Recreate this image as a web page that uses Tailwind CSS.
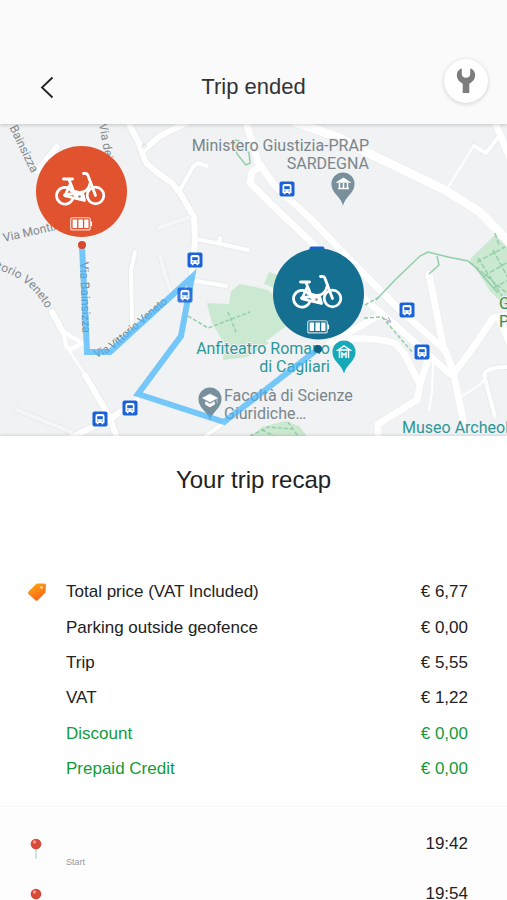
<!DOCTYPE html>
<html lang="en">
<head>
    <meta charset="UTF-8">
    <meta name="viewport" content="width=device-width, initial-scale=1.0">
    <title>Trip ended</title>
    <script src="https://cdn.jsdelivr.net/npm/@tailwindcss/browser@4"></script>
</head>
<body class="h-screen overflow-hidden flex flex-col bg-white text-[#222] font-['Liberation_Sans',Arial,sans-serif]">

    <header class="relative z-10 shrink-0 bg-[#fafafa] pt-[50px] shadow-[0_1px_4px_rgba(0,0,0,0.2)]">
        <div class="grid grid-cols-[1fr_auto_1fr] items-center h-[74px] px-[19px]">
            <button type="button" aria-label="Back" class="justify-self-start pl-[17px]">
                <svg class="w-5 h-6" viewBox="0 0 20 24" fill="none" stroke="#222" stroke-width="1.8"><path d="M16.500 2.500 6 12.500 16.500 22.500"/></svg>
            </button>
            <h1 class="text-[22px] leading-7 text-[#333]">Trip ended</h1>
            <button type="button" aria-label="Report a problem" class="justify-self-end self-start mt-[9px] w-11 h-11 rounded-full bg-white shadow-[0_1px_4px_rgba(0,0,0,0.18)] flex items-center justify-center">
                <svg class="w-6 h-7" viewBox="0 0 24 28" fill="#7d7d7d"><path d="M7 1.500C4.300 2.800 2.800 5.300 2.800 8.300c0 3.700 2.300 6.500 5.900 8.400V26h6.600v-9.300c3.600-1.900 5.900-4.700 5.900-8.400 0-3-1.500-5.500-4.200-6.800l-.8.500v5.300c0 1.900-1.700 3.400-4.200 3.400S7.800 9.200 7.800 7.300V2z"/></svg>
            </button>
        </div>
    </header>

    <!-- Map -->
    <section aria-label="Trip map" class="shrink-0 h-[312px] bg-[#f0f2f3]">
        <svg class="w-full h-full font-[Roboto,sans-serif]" viewBox="0 124 507 312" preserveAspectRatio="xMidYMid slice">
            <defs>
                <symbol id="bus" viewBox="0 0 16 16" overflow="visible">
                    <rect x=".5" y=".5" width="15" height="15" rx="2" fill="#1a62d8"/>
                    <path d="M3.500 12V5q0-2 2-2h5q2 0 2 2v7h-1.200v1.200H9.500V12h-3v1.200H4.700V12z" fill="#fff"/>
                    <path d="M5.200 5.200h5.600V8.200H5.200z" fill="#1a62d8"/>
                    <path d="M5.200 10h1.300M9.500 10h1.300" stroke="#1a62d8"/>
                </symbol>
                <symbol id="bike" viewBox="0 0 52 34" overflow="visible">
                    <g fill="none" stroke="#fff" stroke-width="2.800" stroke-linecap="round" stroke-linejoin="round">
                        <path d="M17.500 18.500a8.400 8.400 0 1 0 1 9"/>
                        <circle cx="41.500" cy="23.500" r="8.300"/>
                        <path d="M29.500 1.500h2q1.800 0 2.500 2l7.500 20"/>
                        <path d="M36.500 10Q34.500 20 26 20.500L17 18.500"/>
                        <path d="M9.500 7h9"/>
                        <path d="M15 7.500l5 12.500M16.500 11.500l-5.500 12"/>
                        <path d="M10.500 23l9-1.500 9.500 1 1.500 6-19-4.500"/>
                    </g>
                    <path d="M17 20l9 2 4 1-1 6-7-2z" fill="#fff"/>
                    <circle cx="25.500" cy="24.500" r="1.300" fill="#8c8c8c"/>
                </symbol>
                <symbol id="battery" viewBox="0 0 23 14" overflow="visible">
                    <rect x=".7" y=".7" width="19.600" height="12.200" rx="2" fill="none" stroke="#fff" stroke-opacity=".8" stroke-width="1.100"/>
                    <path d="M21.300 4.500v4.700" stroke="#fff" stroke-width="1.500"/>
                    <path d="M2.600 2.500h4.500v8.600H2.600zM8.400 2.500h4.500v8.600H8.400zM14.200 2.500h4.300v8.600h-4.300z" fill="#fff"/>
                </symbol>
                <symbol id="pin" viewBox="0 0 24 34" overflow="visible">
                    <path d="M12 .5a11.500 11.500 0 0 0-11.500 11.500c0 5 2.500 8 5.500 11.500 3 3.500 4.800 6 6 10 1.200-4 3-6.500 6-10 3-3.500 5.500-6.500 5.500-11.500A11.500 11.500 0 0 0 12 .5z"/>
                </symbol>
            </defs>

            <!-- Parks -->
            <g fill="#cbe8d0">
                <path d="M207 303l22 1 2-13 9-7 15 3 13 3 25 25-8 12-19 14 3 2-22 14-24 3 1-17-12-20z"/>
                <path d="M269 272l8 3-3 13-10-4z"/>
                <path d="M252 436l10-9 23-6 14 5 8 10z"/>
                <path d="M470 259l26-25 11 10v64l-17-17z"/>
            </g>

            <!-- Roads: soft casing first, white fill over it -->
            <g fill="none" stroke-linecap="round" stroke-linejoin="round">
                <g stroke="#e8ebec">
                    <path stroke-width="8" d="M127 120l12 23 5 15 3 6 11 9 14 10 8 10 14 24 1 23-3 33M144 150l16-14 28-14M57 147l-20 24M52 312l12 22M85 375l25 43 7 20M70 438l40-19 27-19"/>
                    <path stroke-width="6" d="M180 190l13-23 5-4 9 3M195 239l22 4 31 7M219 243l1-5M158 228l32-11M135 252l-4 18 1 55M160 256l5 19 6 16M17 410l54 22M196 281l30 5M203 438l22-16"/>
                    <path stroke-width="10" d="M295 122l45 16 28 15 77 37 35 22 29 30"/>
                    <path stroke-width="8" d="M246 122l12 40 17 24 35 32 52 54 38 38 45 40 8 20 12 60M258 168l-6 4-2 11 20 20 40 38 57 60 28 24 35 31 20 18M429 274l15 76M455 372l20-27 18-27 15-3M500 320l9 22M338 340q40-4 58 4l8 9 16 32-3 15-39 24v14M420 385l8-26M330 343l50-28M494 120l15 36"/>
                    <path stroke-width="6" d="M474 146l12 7 14-18M509 367q-23 0-25 8l11 42"/>
                </g>
                <g stroke="#fff">
                    <path stroke-width="6" d="M127 120l12 23 5 15 3 6 11 9 14 10 8 10 14 24 1 23-3 33M144 150l16-14 28-14M57 147l-20 24M52 312l12 22M85 375l25 43 7 20M70 438l40-19 27-19"/>
                    <path stroke-width="4" d="M180 190l13-23 5-4 9 3M195 239l22 4 31 7M219 243l1-5M135 252l-4 18 1 55M196 281l30 5M203 438l22-16"/>
                    <path stroke-width="4" stroke="#f5f6f7" d="M158 228l32-11M160 256l5 19 6 16M17 410l54 22"/>
                    <path stroke-width="9" d="M295 122l45 16 28 15 77 37 35 22 29 30"/>
                    <path stroke-width="7" d="M246 122l12 40 17 24 35 32 52 54 38 38 45 40 8 20 12 60M258 168l-6 4-2 11 20 20 40 38 57 60 28 24 35 31 20 18M429 274l15 76M455 372l20-27 18-27 15-3M500 320l9 22M338 340q40-4 58 4l8 9 16 32-3 15-39 24v14M420 385l8-26M330 343l50-28M494 120l15 36"/>
                    <path stroke-width="4" d="M474 146l12 7 14-18M509 367q-23 0-25 8l11 42M64 334l2 12 4 4 12-7-17-10M82 343l5 3"/>
                    <path stroke-width="2" d="M69 350l16 25M473 147l-25 40M433 362l-1 30-3 18M461 397l20-13 5-8"/>
                    <circle cx="455" cy="371" r="4"/>
                    <circle cx="144" cy="146" r="2" stroke="#dcdfe1" stroke-width="1"/>
                </g>
            </g>

            <!-- Footpaths -->
            <g fill="none" stroke="#93cfaa" stroke-width="1.500">
                <path d="M234 141l3 13 9 11 4-2-1-10-10-12-5-1z"/>
                <path d="M376 300l19-20 25-24 8-4 20 5 20 4 8 7 22 25M437 256l2 9-10 9"/>
                <path stroke-dasharray="4 2" d="M188 316l20 12 42-16M228 312l8 20M364 318l18-1 31 36M365 305l14-8M250 436l18-9 24 2M288 422l10 14M262 430l12 6"/>
                <path stroke-dasharray="5 2" d="M495 233l4 12M477 262l28-15M484 276l24-14M494 288l14-8M478 258l24 38M493 250l15 28M470 262l38 32"/>
            </g>
            <path d="M383 318l8 4M388 317l3 5-5 0" fill="none" stroke="#a8a9c5"/>

            <!-- Street names -->
            <defs>
                <path id="veneto" d="M-10 269Q31 273 53 322"/>
                <path id="vittorio" d="M96 358Q112 352 124 340L174 297"/>
            </defs>
            <g fill="#84898d" font-size="12" stroke="#f0f2f3" stroke-width="2" paint-order="stroke">
                <text transform="translate(5 119) rotate(64)">a Bainsizza</text>
                <text transform="translate(99 124) rotate(80)">Via dei</text>
                <text transform="translate(4 242) rotate(-13)">Via Montixi</text>
                <text><textPath href="#veneto">ittorio Veneto</textPath></text>
            </g>
            <g fill="#747b80" font-size="12">
                <text transform="translate(80 262) rotate(88)">Via Bainsizza</text>
                <text font-size="11"><textPath href="#vittorio">Via Vittorio Veneto</textPath></text>
            </g>

            <!-- Places -->
            <g font-size="16" stroke="#f0f2f3" stroke-width="2" paint-order="stroke">
                <g fill="#7a868c">
                    <text x="369" y="151" text-anchor="end">Ministero Giustizia-PRAP</text>
                    <text x="369" y="169" text-anchor="end">SARDEGNA</text>
                    <text x="224" y="401">Facoltà di Scienze</text>
                    <text x="224" y="419">Giuridiche…</text>
                </g>
                <g fill="#2b979b">
                    <text x="330" y="354" text-anchor="end">Anfiteatro Romano</text>
                    <text x="330" y="372" text-anchor="end">di Cagliari</text>
                    <text x="402" y="433">Museo Archeologico</text>
                </g>
                <g fill="#2f9150">
                    <text x="499" y="309">Giardini</text>
                    <text x="499" y="327">Pubblici</text>
                </g>
            </g>

            <use href="#pin" x="331" y="172" width="24" height="34" fill="#78909c"/>
            <path d="M338 182l5.500-3.500 5.500 3.500zM338 188.500h11M339.500 183v5M343.500 183v5M347.500 183v5" fill="#fff" stroke="#fff" stroke-width="1.500"/>
            <use href="#pin" x="332" y="340" width="24" height="34" fill="#18a9b8"/>
            <path d="M338 350l6-4 6 4zM339.500 350v8M348.500 350v8M342 358v-5l2 2 2-2v5" fill="none" stroke="#fff" stroke-width="1.500"/>
            <use href="#pin" x="198" y="387" width="24" height="34" fill="#78909c"/>
            <path d="M202.500 398l7.500-4 7.500 4-7.500 4zM205.500 401.500v3l4.500 2.500 4.500-2.500v-3l-4.500 2.500zM217 398v5" fill="#fff" stroke="#fff" stroke-width=".5"/>

            <!-- Bus stops -->
            <use href="#bus" x="279" y="181" width="16" height="16"/>
            <use href="#bus" x="187" y="252" width="16" height="16"/>
            <use href="#bus" x="309" y="246" width="16" height="16"/>
            <use href="#bus" x="399" y="302" width="16" height="16"/>
            <use href="#bus" x="414" y="344" width="16" height="16"/>
            <use href="#bus" x="122" y="400" width="16" height="16"/>
            <use href="#bus" x="92" y="411" width="16" height="16"/>

            <!-- Route -->
            <path d="M82 246l5 106h23l82-75-11 59-43 58 86 28 94-73" fill="none" stroke="#45b5fb" stroke-opacity=".72" stroke-width="6"/>
            <use href="#bus" x="177" y="287" width="16" height="16" opacity=".85"/>
            <circle cx="82" cy="245" r="4" fill="#d9482e"/>
            <circle cx="318" cy="349" r="4" fill="#10607f"/>

            <!-- Start and end bikes -->
            <circle cx="81.500" cy="191.500" r="45.500" fill="#e1532f"/>
            <use href="#bike" x="54" y="172" width="52" height="34"/>
            <use href="#battery" x="70" y="217" width="23" height="14"/>
            <circle cx="318.500" cy="294" r="45.500" fill="#146f91"/>
            <use href="#bike" x="291" y="275" width="52" height="34"/>
            <use href="#battery" x="307" y="320" width="23" height="14"/>
        </svg>
    </section>

    <main class="relative flex-1 min-h-0 flex flex-col bg-white shadow-[0_-1px_3px_rgba(0,0,0,0.12)]">
        <h2 class="mt-7 text-center text-[24px] leading-8">Your trip recap</h2>

        <table class="mt-[78px] w-full text-[17px] leading-5">
            <tbody>
                <tr class="h-9">
                    <td class="w-[66px] pl-[27px]">
                        <svg class="w-5 h-5" viewBox="0 0 20 20">
                            <defs><linearGradient id="tag" x1="0" y1="0" x2=".6" y2="1"><stop offset="0" stop-color="#ffb010"/><stop offset="1" stop-color="#f8641c"/></linearGradient></defs>
                            <path d="M10.500 1.500h7q1.500 0 1.500 1.500l-.5 6.500q0 1-.8 1.800l-7 7q-1.200 1-2.400 0L1.500 12q-1-1.200 0-2.400l7-7.200q.8-.9 2-.9z" fill="url(#tag)"/>
                            <circle cx="14.500" cy="5.500" r="1.300" fill="#ffe6b8"/>
                        </svg>
                    </td>
                    <th scope="row" class="text-left font-normal">Total price (VAT Included)</th>
                    <td class="pr-[39px] text-right">€ 6,77</td>
                </tr>
                <tr class="h-[35px]">
                    <td></td>
                    <th scope="row" class="text-left font-normal">Parking outside geofence</th>
                    <td class="pr-[39px] text-right">€ 0,00</td>
                </tr>
                <tr class="h-[35px]">
                    <td></td>
                    <th scope="row" class="text-left font-normal">Trip</th>
                    <td class="pr-[39px] text-right">€ 5,55</td>
                </tr>
                <tr class="h-9">
                    <td></td>
                    <th scope="row" class="text-left font-normal">VAT</th>
                    <td class="pr-[39px] text-right">€ 1,22</td>
                </tr>
                <tr class="h-[35px] text-[#129b38]">
                    <td></td>
                    <th scope="row" class="text-left font-normal">Discount</th>
                    <td class="pr-[39px] text-right">€ 0,00</td>
                </tr>
                <tr class="h-[35px] text-[#129b38]">
                    <td></td>
                    <th scope="row" class="text-left font-normal">Prepaid Credit</th>
                    <td class="pr-[39px] text-right">€ 0,00</td>
                </tr>
            </tbody>
        </table>

        <ul class="mt-5 flex-1 min-h-0 overflow-hidden border-t border-[#f7f7f7] bg-[#fdfdfd] pt-[27px] pr-[39px] text-[17px] leading-5">
            <li class="flex h-[50px]">
                <span class="w-[66px] pl-[30px] pt-1">
                    <svg class="w-3 h-[22px]" viewBox="0 0 12 22"><path d="M6 8v13" stroke="#d5dfdf" stroke-width="2"/><circle cx="6" cy="6" r="5.300" fill="#d84a3a"/><circle cx="4.500" cy="4" r="1.700" fill="#f09a88"/></svg>
                </span>
                <span class="flex-1 pt-[18px] text-[9px] text-[#999]">Start</span>
                <time>19:42</time>
            </li>
            <li class="flex h-[50px]">
                <span class="w-[66px] pl-[30px] pt-1">
                    <svg class="w-3 h-[22px]" viewBox="0 0 12 22"><path d="M6 8v13" stroke="#d5dfdf" stroke-width="2"/><circle cx="6" cy="6" r="5.300" fill="#d84a3a"/><circle cx="4.500" cy="4" r="1.700" fill="#f09a88"/></svg>
                </span>
                <span class="flex-1"></span>
                <time>19:54</time>
            </li>
        </ul>
    </main>
</body>
</html>
